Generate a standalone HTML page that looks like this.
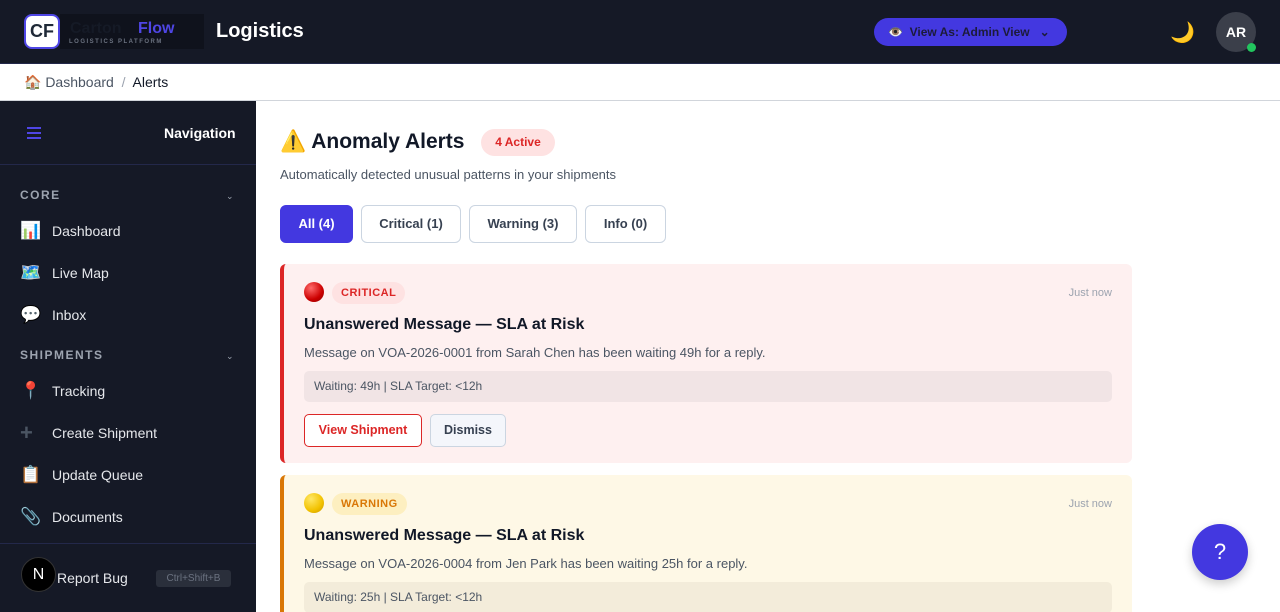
<!DOCTYPE html>
<html><head><meta charset="utf-8"><style>
*{box-sizing:border-box;margin:0;padding:0}
html,body{width:1280px;height:612px;overflow:hidden}
body{font-family:"Liberation Sans",sans-serif;background:#fff;position:relative;color:#111827}
.hdr{position:absolute;left:0;top:0;width:1280px;height:64px;background:#151926;border-bottom:1px solid #23284a}
.logo{position:absolute;left:24px;top:14px;width:36px;height:35px;background:#fff;border:2px solid #4f46e5;border-radius:8px;color:#1f2937;font-weight:700;font-size:18px;line-height:31px;text-align:center}
.brand{position:absolute;left:60px;top:14px;width:144px;height:35px;background:#0f121c}
.brand .f{position:absolute;left:78px;top:6px;color:#4f46e5;font-weight:700;font-size:16px}
.brand .c{position:absolute;left:10px;top:6px;color:#151a26;font-weight:700;font-size:16px}
.brand .s{position:absolute;left:9px;top:25px;color:#6b7280;font-size:6px;letter-spacing:1.5px;font-weight:700}
.title{position:absolute;left:216px;top:20px;color:#fff;font-size:20px;font-weight:700}
.va{position:absolute;left:874px;top:18px;width:193px;height:28px;background:#4338e0;border-radius:14px;color:#1c1b3a;font-size:12px;font-weight:700;line-height:28px;padding-left:14px}
.av{position:absolute;left:1216px;top:12px;width:40px;height:40px;border-radius:50%;background:#3b3f4a;color:#fff;font-weight:700;font-size:14px;line-height:40px;text-align:center}
.dot{position:absolute;left:1247px;top:43px;width:9px;height:9px;border-radius:50%;background:#22c55e}
.bc{position:absolute;left:0;top:64px;width:1280px;height:37px;border-bottom:1px solid #d1d5db;font-size:14px;line-height:36px;padding-left:24px;color:#4b5563}
.bc b{color:#111827;font-weight:400}
.sb{position:absolute;left:0;top:101px;width:256px;height:511px;background:#151926;color:#e5e7eb}
.sb .nh{height:64px;border-bottom:1px solid #23284a;position:relative}
.sec{font-size:12px;letter-spacing:1.5px;font-weight:700;color:#9ca3af;position:absolute;left:20px}
.chev{position:absolute;left:226px;font-size:9px;color:#9ca3af}
.it{position:absolute;left:20px;font-size:14px;color:#e5e7eb;line-height:20px;height:20px}
.it i{font-style:normal;display:inline-block;width:32px;font-size:17px;vertical-align:top}
.main{position:absolute;left:280px}
.tab{position:absolute;top:205px;height:38px;border:1px solid #cbd5e1;border-radius:6px;font-size:13px;font-weight:700;color:#374151;line-height:36px;text-align:center}
.card{position:absolute;left:280px;width:852px;border-radius:6px}
.badge{position:absolute;left:48px;top:18px;height:22px;border-radius:11px;font-size:11px;font-weight:700;line-height:22px;padding:0 9px;letter-spacing:.5px}
.ball{position:absolute;left:20px;top:18px;width:20px;height:20px;border-radius:50%}
.ct{position:absolute;left:20px;top:52px;font-size:16px;font-weight:700}
.cd{position:absolute;left:20px;top:81px;font-size:13px;color:#4b5563}
.cm{position:absolute;left:20px;top:107px;width:808px;height:31px;border-radius:5px;font-size:12px;color:#4b5563;line-height:31px;padding-left:10px}
.jn{position:absolute;right:20px;top:23px;font-size:11px;color:#9ca3af}
</style></head><body>
<div class="hdr">
<div class="logo">CF</div>
<div class="brand"><span class="c">Carton</span><span class="f">Flow</span><span class="s">LOGISTICS PLATFORM</span></div>
<div class="title">Logistics</div>
<div class="va">👁️&nbsp; View As: Admin View &nbsp;&nbsp;⌄</div>
<div style="position:absolute;left:1170px;top:20px;font-size:20px;color:#eab308">🌙</div>
<div class="av">AR</div><div class="dot"></div>
</div>
<div class="bc">🏠 Dashboard &nbsp;<span style="color:#9ca3af">/</span>&nbsp; <b>Alerts</b></div>
<div class="sb">
<div class="nh"><div style="position:absolute;left:27px;top:26px;width:14px;height:12px;border-top:2px solid #4f46e5;border-bottom:2px solid #4f46e5"><div style="margin-top:3px;height:2px;background:#4f46e5"></div></div><div style="position:absolute;left:164px;top:24px;font-size:14px;font-weight:700;color:#fff">Navigation</div></div>
<div class="sec" style="top:87px">CORE</div><div class="chev" style="top:90px">⌄</div>
<div class="it" style="top:120px"><i>📊</i>Dashboard</div>
<div class="it" style="top:162px"><i>🗺️</i>Live Map</div>
<div class="it" style="top:204px"><i>💬</i>Inbox</div>
<div class="sec" style="top:247px">SHIPMENTS</div><div class="chev" style="top:250px">⌄</div>
<div class="it" style="top:280px"><i>📍</i>Tracking</div>
<div class="it" style="top:322px"><i style="color:#4b5563;font-weight:700;font-size:22px;line-height:20px">+</i>Create Shipment</div>
<div class="it" style="top:364px"><i>📋</i>Update Queue</div>
<div class="it" style="top:406px"><i>📎</i>Documents</div>
<div style="position:absolute;top:442px;left:0;width:256px;border-top:1px solid #23284a"></div>
<div style="position:absolute;left:21px;top:456px;width:35px;height:35px;border-radius:50%;background:#000;border:1px solid #333;color:#fff;text-align:center;line-height:33px;font-size:16px">N</div>
<div class="it" style="left:57px;top:467px">Report Bug</div>
<div style="position:absolute;left:156px;top:469px;width:75px;height:17px;background:#2a2f3b;border-radius:3px;font-size:10px;color:#6b7280;text-align:center;line-height:17px">Ctrl+Shift+B</div>
</div>
<div class="main" style="top:130px;font-size:21px;font-weight:700">⚠️ Anomaly Alerts</div>
<div style="position:absolute;left:481px;top:129px;width:74px;height:27px;border-radius:14px;background:#fee2e2;color:#dc2626;font-size:12px;font-weight:700;text-align:center;line-height:27px">4 Active</div>
<div class="main" style="top:167px;font-size:13px;color:#4b5563">Automatically detected unusual patterns in your shipments</div>
<div class="tab" style="left:280px;width:73px;background:#4338e0;border-color:#4338e0;color:#fff">All (4)</div>
<div class="tab" style="left:361px;width:100px">Critical (1)</div>
<div class="tab" style="left:469px;width:108px">Warning (3)</div>
<div class="tab" style="left:585px;width:81px">Info (0)</div>
<div class="card" style="top:264px;height:199px;background:#fef0f0;border-left:4px solid #dc2626">
<div class="ball" style="background:radial-gradient(circle at 35% 30%,#ff6b6b,#c00 60%,#800)"></div>
<div class="badge" style="background:#fee2e2;color:#dc2626">CRITICAL</div>
<div class="jn">Just now</div>
<div class="ct">Unanswered Message — SLA at Risk</div>
<div class="cd">Message on VOA-2026-0001 from Sarah Chen has been waiting 49h for a reply.</div>
<div class="cm" style="background:#f1e4e5">Waiting: 49h | SLA Target: &lt;12h</div>
<div style="position:absolute;left:20px;top:150px;width:118px;height:33px;border:1px solid #dc2626;border-radius:5px;background:#fff;color:#dc2626;font-size:12.5px;font-weight:700;text-align:center;line-height:31px">View Shipment</div>
<div style="position:absolute;left:146px;top:150px;width:76px;height:33px;border:1px solid #cbd5e1;border-radius:5px;background:#f4f6fb;color:#374151;font-size:12.5px;font-weight:700;text-align:center;line-height:31px">Dismiss</div>
</div>
<div class="card" style="top:475px;height:160px;background:#fef8e6;border-left:4px solid #d97706">
<div class="ball" style="background:radial-gradient(circle at 35% 30%,#ffe766,#f2c200 60%,#c89400)"></div>
<div class="badge" style="background:#fdefc0;color:#d97706">WARNING</div>
<div class="jn">Just now</div>
<div class="ct">Unanswered Message — SLA at Risk</div>
<div class="cd">Message on VOA-2026-0004 from Jen Park has been waiting 25h for a reply.</div>
<div class="cm" style="background:#f3ecda">Waiting: 25h | SLA Target: &lt;12h</div>
</div>
<div style="position:absolute;left:1192px;top:524px;width:56px;height:56px;border-radius:50%;background:#4338e0;color:#fff;font-size:22px;text-align:center;line-height:56px;box-shadow:0 4px 10px rgba(0,0,0,.2)">?</div>
</body></html>
